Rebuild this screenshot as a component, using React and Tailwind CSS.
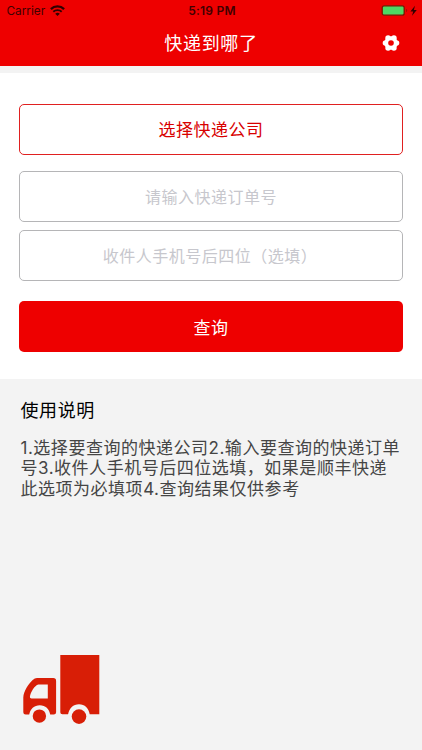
import React, { useState } from 'react';

const WifiIcon = () => (
  <svg width="15" height="12" viewBox="0 0 15 12" fill="none" stroke="#300000">
    <path d="M.9 4.1a9.4 9.4 0 0 1 13.2 0" strokeWidth="2.3" />
    <path d="M3.3 6.8a6 6 0 0 1 8.4 0" strokeWidth="1.9" />
    <path d="M7.5 11.1 5.2 8.8a3.3 3.3 0 0 1 4.6 0z" fill="#300000" stroke="none" />
  </svg>
);

const BatteryIcon = () => (
  <svg width="37" height="12" viewBox="0 0 37 12">
    <rect x="1.2" y=".8" width="22" height="9.4" rx="2" fill="#4cd964" stroke="#7a1500" strokeWidth="1.3" />
    <path d="M25.3 4c1.2.3 1.2 2.7 0 3z" fill="#7a1500" />
    <path d="M34 .8 29.4 6.4h2.8L31 10.8l4.8-5.8h-2.9z" fill="#300000" />
  </svg>
);

const GearIcon = () => (
  <svg width="18" height="18" viewBox="0 0 18 18">
    <g fill="#fff">
      <circle cx="9" cy="9" r="6.7" />
      <circle cx="14.5" cy="9" r="2.8" />
      <circle cx="11.9" cy="4" r="2.8" />
      <circle cx="6.1" cy="4" r="2.8" />
      <circle cx="3.5" cy="9" r="2.8" />
      <circle cx="6.1" cy="14" r="2.8" />
      <circle cx="11.9" cy="14" r="2.8" />
    </g>
    <circle cx="9" cy="9" r="2.8" fill="#ee0000" />
  </svg>
);

const TruckIcon = () => (
  <svg width="78" height="70" viewBox="0 0 78 70" fill="#d81e06">
    <path d="M37.3 0H76.3V59.3H66.7C65.8 53.4 61.8 49.3 56 49.3S46.2 53.4 45.1 59.3H39.3Q37.3 59.3 37.3 57.3Z" />
    <path
      fillRule="evenodd"
      d="M14 23.1H30.3Q33.1 23.1 33.1 25.9V57.2Q33.1 59.6 30.7 59.6H27.2C26.4 54 22.4 50.2 16.8 50.2S7.2 54 6.2 59.6H2.7Q.3 59.6 .3 57.2V42.5C.6 36 6 28.2 9.7 24.9Q11.7 23.1 14 23.1ZM15.4 29.4C11.5 30.2 7.6 37.5 6.9 41.4Q6.6 43.4 8.5 43.4H24.8V29.4Z"
    />
    <circle cx="16.4" cy="61.1" r="6.7" />
    <circle cx="56" cy="61.6" r="7.3" />
  </svg>
);

const Header = () => (
  <header className="h-[65.5px] bg-[#ee0000]">
    <div className="grid h-[22px] grid-cols-3 items-center pl-[6.5px] pr-[4.5px] text-[#400000]">
      <div className="flex items-center gap-[5px]">
        <span className="pt-[1px] text-[11.8px]">Carrier</span>
        <WifiIcon />
      </div>
      <span className="text-center text-[12px] font-semibold tracking-[0.2px]">5:19 PM</span>
      <div className="flex justify-end">
        <BatteryIcon />
      </div>
    </div>
    <div className="grid h-[43px] grid-cols-[1fr_auto_1fr] items-center px-[22px]">
      <h1 className="col-start-2 text-[18px] tracking-[0.7px] text-white">快递到哪了</h1>
      <button type="button" className="justify-self-end pb-[1px]">
        <GearIcon />
      </button>
    </div>
  </header>
);

const fieldClass =
  'block h-[51px] w-full rounded-[5px] border border-[#b5b5b7] bg-white text-center text-[16px] tracking-[0.5px] placeholder-[#c7c7cd] outline-none';

const App = () => {
  const [orderNo, setOrderNo] = useState('');
  const [phone, setPhone] = useState('');

  return (
    <div className="flex h-[750px] w-[422px] flex-col bg-[#f3f3f3] font-['Inter','Noto_Sans_CJK_SC',sans-serif]">
      <Header />

      {/* Query form */}
      <div className="mt-[7.5px] h-[306px] bg-white px-[18.6px] pt-[31px]">
        <button
          type="button"
          className="block h-[51px] w-full rounded-[5px] border border-[#e02020] pt-[3px] text-[17px] tracking-[0.5px] text-[#d80000]"
        >
          选择快递公司
        </button>
        <input
          className={`mt-[16.3px] ${fieldClass}`}
          value={orderNo}
          onChange={(e) => setOrderNo(e.target.value)}
          placeholder="请输入快递订单号"
        />
        <input
          className={`mt-[8px] pr-[2px] ${fieldClass}`}
          value={phone}
          onChange={(e) => setPhone(e.target.value)}
          placeholder="收件人手机号后四位（选填）"
        />
        <button
          type="button"
          className="mt-[20.2px] block h-[51px] w-full rounded-[5px] bg-[#ee0000] pt-[3px] text-[17px] tracking-[0.5px] text-white"
        >
          查询
        </button>
      </div>

      {/* Instructions */}
      <div className="pl-[20.5px] pt-[18px]">
        <h2 className="text-[18px] leading-[27px] tracking-[0.6px] text-black">使用说明</h2>
        <p className="mt-[13.6px] whitespace-nowrap text-[17px] leading-[20.6px] tracking-[0.52px] text-[#454545]">
          1.选择要查询的快递公司2.输入要查询的快递订单
          <br />
          号3.收件人手机号后四位选填，如果是顺丰快递
          <br />
          此选项为必填项4.查询结果仅供参考
        </p>
      </div>

      <div className="mt-auto pb-[25px] pl-[22.7px]">
        <TruckIcon />
      </div>
    </div>
  );
};

export default App;
